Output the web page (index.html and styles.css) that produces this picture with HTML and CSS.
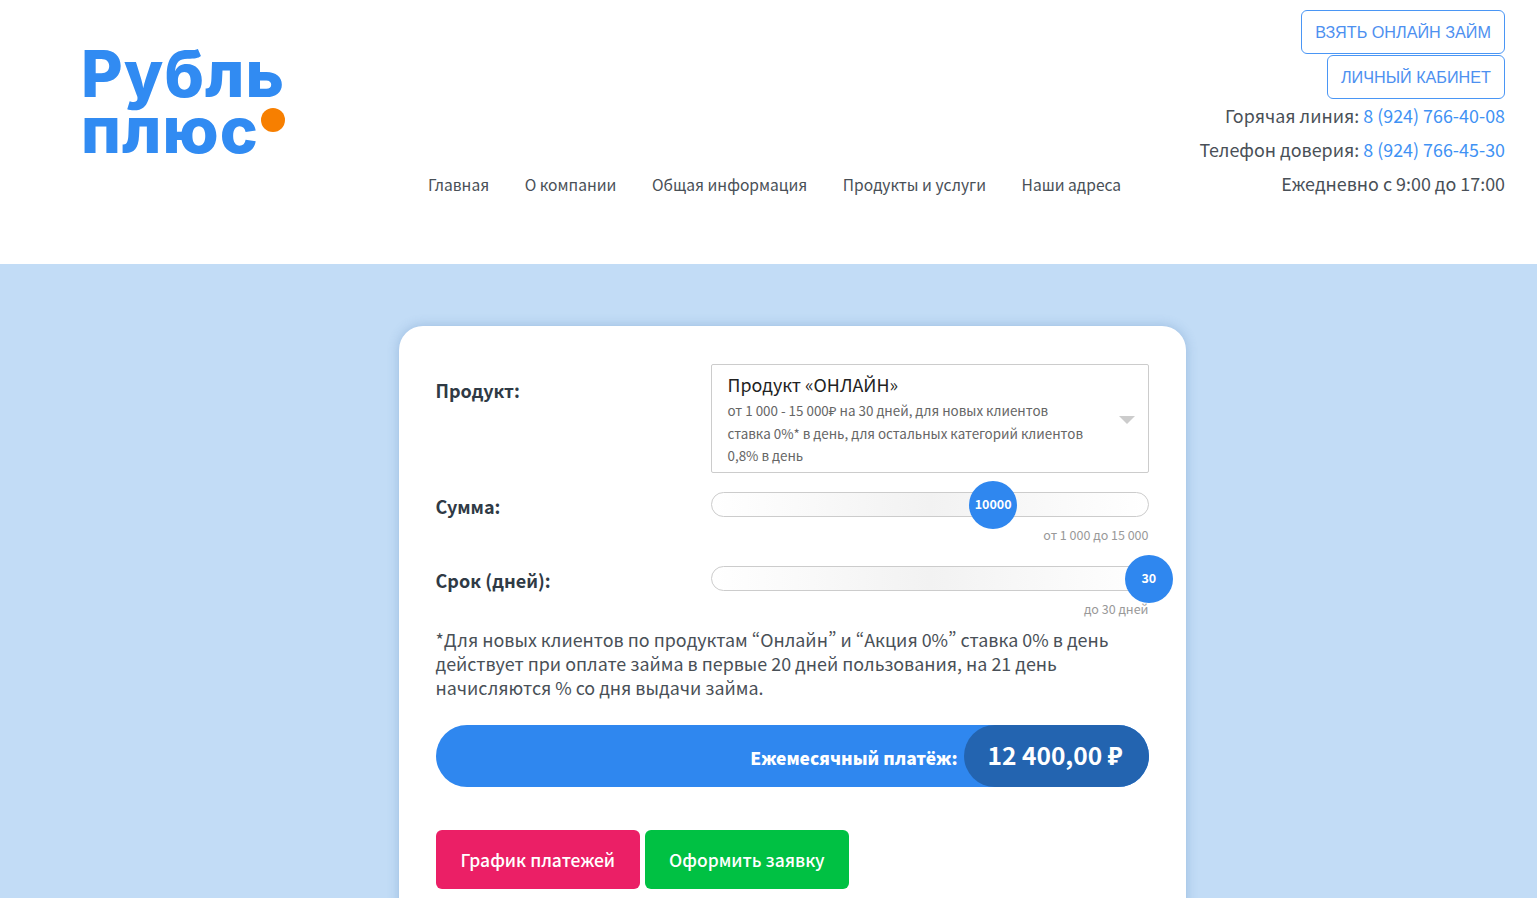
FILE: index.html
```html
<!DOCTYPE html>
<html lang="ru">
<head>
  <meta charset="UTF-8">
  <meta name="viewport" content="width=device-width, initial-scale=1.0">
  <title>Рубль плюс</title>
  <link rel="stylesheet" href="styles.css">
</head>
<body>

  <header class="header">
    <a class="logo" href="#">
      <span class="logo-top">Рубль</span>
      <span class="logo-bottom">плюс<span class="logo-dot"></span></span>
    </a>

    <nav class="nav">
      <a href="#">Главная</a>
      <a href="#">О компании</a>
      <a href="#">Общая информация</a>
      <a href="#">Продукты и услуги</a>
      <a href="#">Наши адреса</a>
    </nav>

    <div class="contacts">
      <a class="outline-btn" href="#">ВЗЯТЬ ОНЛАЙН ЗАЙМ</a>
      <a class="outline-btn" href="#">ЛИЧНЫЙ КАБИНЕТ</a>
      <p class="contact-line">Горячая линия: <a href="#">8 (924) 766-40-08</a></p>
      <p class="contact-line">Телефон доверия: <a href="#">8 (924) 766-45-30</a></p>
      <p class="contact-line">Ежедневно с 9:00 до 17:00</p>
    </div>
  </header>

  <main class="calc-section">
    <div class="calc-card">

      <div class="calc-row row-product">
        <label class="calc-label">Продукт:</label>
        <div class="product-select">
          <div class="product-title">Продукт «ОНЛАЙН»</div>
          <div class="product-desc">от 1 000 - 15 000₽ на 30 дней, для новых клиентов<br>ставка 0%* в день, для остальных категорий клиентов<br>0,8% в день</div>
          <span class="select-arrow"></span>
        </div>
      </div>

      <div class="calc-row row-amount">
        <label class="calc-label">Сумма:</label>
        <div>
          <div class="slider">
            <span class="slider-thumb" style="left: 64.6%">10000</span>
          </div>
          <div class="slider-hint">от 1 000 до 15 000</div>
        </div>
      </div>

      <div class="calc-row row-term">
        <label class="calc-label">Срок (дней):</label>
        <div>
          <div class="slider">
            <span class="slider-thumb" style="left: 100.3%">30</span>
          </div>
          <div class="slider-hint">до 30 дней</div>
        </div>
      </div>

      <p class="calc-note">*Для новых клиентов по продуктам “Онлайн” и “Акция 0%” ставка 0% в день действует при оплате займа в первые 20 дней пользования, на 21 день начисляются % со дня выдачи займа.</p>

      <div class="payment-bar">
        <span class="payment-label">Ежемесячный платёж:</span>
        <span class="payment-value">12 400,00 ₽</span>
      </div>

      <div class="calc-actions">
        <button class="action-btn btn-pink" type="button">График платежей</button>
        <button class="action-btn btn-green" type="button">Оформить заявку</button>
      </div>

    </div>
  </main>

</body>
</html>
```

FILE: styles.css
```css
* {
  box-sizing: border-box;
}

html, body {
  height: 100%;
}

body {
  margin: 0;
  overflow: hidden;
  font-family: "Noto Sans CJK SC", "Noto Sans", sans-serif;
  font-feature-settings: "pwid";
  color: #495057;
  background-color: #fff;
  display: flex;
  flex-direction: column;
}

a {
  text-decoration: none;
}

p {
  margin: 0;
}

.header {
  flex: none;
  height: 264px;
  display: flex;
  align-items: flex-start;
  padding: 10px 32px 0 81px;
}

.logo {
  flex: none;
  width: 347px;
  padding-top: 36px;
  font-family: Inter, sans-serif;
  font-weight: 800;
  color: #318bf2;
  display: flex;
  flex-direction: column;
}

.logo-top,
.logo-bottom {
  font-size: 64px;
  line-height: 56px;
  letter-spacing: 1.1px;
}

.logo-bottom {
  position: relative;
  width: 204px;
}

.logo-dot {
  position: absolute;
  right: 0;
  top: 6px;
  width: 24px;
  height: 24px;
  border-radius: 50%;
  background-color: #f77f00;
}

.nav {
  display: flex;
  gap: 35.5px;
  margin-top: 163px;
  font-size: 15.6px;
  line-height: 22px;
}

.nav a {
  color: #495057;
}

.contacts {
  margin-left: auto;
  display: flex;
  flex-direction: column;
  align-items: flex-end;
}

.outline-btn {
  height: 44px;
  padding: 1px 13px 0;
  margin-bottom: 1px;
  display: flex;
  align-items: center;
  font-family: "Liberation Sans", Arial, sans-serif;
  font-size: 16.2px;
  color: #4d90f0;
  border: 1px solid #4a96f5;
  border-radius: 6px;
}

.contact-line {
  font-size: 17.9px;
  line-height: 34px;
  color: #495057;
  position: relative;
  top: -2px;
}

.contact-line a {
  color: #3f92f4;
}

.calc-section {
  flex: 1;
  background-color: #c2dcf6;
  padding-top: 62px;
  min-height: 0;
}

.calc-card {
  width: 787px;
  height: 700px;
  margin-left: 398.5px;
  padding: 38px 37px 0;
  background-color: #fff;
  border-radius: 24px;
  box-shadow: 0 0 12px rgba(60, 110, 170, 0.3);
}

.calc-row {
  display: grid;
  grid-template-columns: 275px 438px;
}

.calc-label {
  font-size: 18px;
  font-weight: 700;
  line-height: 24px;
  color: #2f3a45;
}

.row-product .calc-label {
  padding-top: 14px;
}

.row-amount {
  margin-top: 19px;
}

.row-amount .calc-label,
.row-term .calc-label {
  padding-top: 2px;
}

.row-term {
  margin-top: 22px;
}

.product-select {
  position: relative;
  height: 109px;
  padding: 7px 16px;
  border: 1px solid #ccc;
  border-radius: 2px;
}

.product-title {
  font-size: 17.9px;
  line-height: 25px;
  color: #222;
}

.product-desc {
  margin-top: 2px;
  font-size: 13.4px;
  line-height: 22.5px;
  color: #666;
}

.select-arrow {
  position: absolute;
  right: 13px;
  top: 51px;
  border-left: 8px solid transparent;
  border-right: 8px solid transparent;
  border-top: 8px solid #ccc;
}

.slider {
  position: relative;
  height: 25px;
  border: 1px solid #ccc;
  border-radius: 13px;
  background: linear-gradient(to right, #fff, #f2f2f2 50%, #fff);
}

.slider-thumb {
  position: absolute;
  top: 50%;
  width: 48px;
  height: 48px;
  padding-bottom: 3px;
  transform: translate(-50%, -50%);
  display: flex;
  align-items: center;
  justify-content: center;
  font-size: 12.5px;
  font-weight: 700;
  color: #fff;
  background-color: #2f87ef;
  border-radius: 50%;
}

.slider-hint {
  margin-top: 9px;
  font-size: 12.5px;
  line-height: 18px;
  text-align: right;
  color: #999;
}

.calc-note {
  margin-top: 9px;
  font-size: 17.9px;
  line-height: 24px;
  color: #495057;
}

.payment-bar {
  height: 62px;
  margin-top: 26px;
  display: flex;
  align-items: center;
  justify-content: flex-end;
  background-color: #2f87ef;
  border-radius: 31px;
  color: #fff;
}

.payment-label {
  margin-top: 2px;
  margin-right: 6px;
  font-size: 17.4px;
  font-weight: 900;
}

.payment-value {
  width: 185px;
  height: 62px;
  padding: 0 2px 4px 0;
  display: flex;
  align-items: center;
  justify-content: center;
  font-size: 24.5px;
  font-weight: 700;
  background-color: #2364b0;
  border-radius: 31px;
}

.calc-actions {
  display: flex;
  gap: 4.5px;
  margin-top: 43px;
}

.action-btn {
  width: 204.5px;
  height: 59px;
  padding-bottom: 2px;
  border: none;
  border-radius: 6px;
  font-family: inherit;
  font-feature-settings: inherit;
  font-size: 17.5px;
  font-weight: 500;
  color: #fff;
  cursor: pointer;
}

.btn-pink {
  background-color: #eb1f66;
}

.btn-green {
  background-color: #00c143;
}
```
